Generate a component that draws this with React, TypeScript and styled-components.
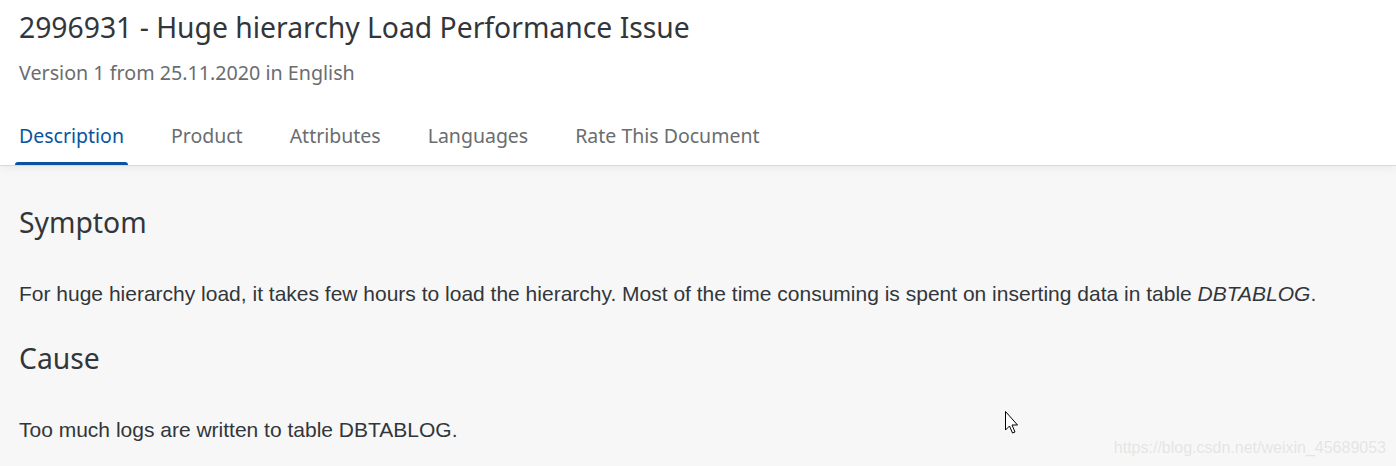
import styled, { createGlobalStyle } from "styled-components";

const GlobalStyle = createGlobalStyle`
  html, body {
    margin: 0;
    padding: 0;
    background: #f7f7f7;
  }
  body {
    width: 1396px;
    height: 466px;
    overflow: hidden;
  }
`;

const headFont = `"Noto Sans", "Open Sans", sans-serif`;
const bodyFont = `"Liberation Sans", Arial, sans-serif`;

const Screen = styled.div`
  position: relative;
  width: 1396px;
  height: 466px;
  background: #f7f7f7;
  overflow: hidden;
`;

const Header = styled.header`
  background: #ffffff;
  border-bottom: 1px solid #d9d9d9;
  box-shadow: 0 2px 10px rgba(0, 0, 0, 0.06);
  padding: 0 0 0 15px;
`;

const Title = styled.h1`
  margin: 0;
  padding: 8px 0 0 4px;
  height: 38px;
  font-family: ${headFont};
  font-weight: 400;
  font-size: 28.3px;
  line-height: 38px;
  color: #32363a;
`;

const Subtitle = styled.div`
  padding: 13px 0 0 4px;
  height: 28px;
  font-family: ${headFont};
  font-size: 19.7px;
  line-height: 28px;
  color: #6a6d70;
`;

const TabBar = styled.nav`
  display: flex;
  margin-top: 18px;
  height: 60px;
  align-items: stretch;
`;

const Tab = styled.div<{ $active?: boolean }>`
  position: relative;
  display: flex;
  align-items: center;
  padding: 0 4px;
  margin-right: 39px;
  font-family: ${headFont};
  font-size: 19.5px;
  color: ${(p) => (p.$active ? "#0854a0" : "#6a6d70")};

  &::after {
    content: "";
    display: ${(p) => (p.$active ? "block" : "none")};
    position: absolute;
    left: 0;
    right: 0;
    bottom: 0;
    height: 3px;
    border-radius: 3px 3px 0 0;
    background: #0854a0;
  }
`;

const Content = styled.main`
  padding: 27px 0 0 19px;
`;

const SectionHeading = styled.h2`
  margin: 0;
  height: 58px;
  font-family: ${headFont};
  font-weight: 400;
  font-size: 28.3px;
  line-height: 58px;
  color: #32363a;
`;

const Paragraph = styled.p`
  margin: 0;
  padding: 28px 0 20px;
  font-family: ${bodyFont};
  font-size: 21px;
  line-height: 30px;
  color: #32363a;

  em {
    font-style: italic;
  }
`;

const Watermark = styled.div`
  position: absolute;
  right: 10px;
  bottom: 9px;
  font-family: ${bodyFont};
  font-size: 16px;
  color: #e4e4e4;
  text-shadow: 0 0 1px #ffffff;
`;

const Cursor = styled.svg`
  position: absolute;
  left: 1004px;
  top: 410px;
`;

const tabs = ["Description", "Product", "Attributes", "Languages", "Rate This Document"];

export default function App() {
  return (
    <Screen>
      <GlobalStyle />
      <Header>
        <Title>2996931 - Huge hierarchy Load Performance Issue</Title>
        <Subtitle>Version 1 from 25.11.2020 in English</Subtitle>
        <TabBar>
          {tabs.map((t, i) => (
            <Tab key={t} $active={i === 0}>
              {t}
            </Tab>
          ))}
        </TabBar>
      </Header>
      <Content>
        <SectionHeading>Symptom</SectionHeading>
        <Paragraph>
          For huge hierarchy load, it takes few hours to load the hierarchy. Most of the time
          consuming is spent on inserting data in table <em>DBTABLOG</em>.
        </Paragraph>
        <SectionHeading>Cause</SectionHeading>
        <Paragraph>Too much logs are written to table DBTABLOG.</Paragraph>
      </Content>
      <Cursor width="20" height="30" viewBox="0 0 20 30">
        <path
          d="M1.5 1.5 L1.5 20 L5.5 16 L8.5 23 L11 22 L8 15 L13.5 15 Z"
          fill="#ffffff"
          stroke="#000000"
          strokeWidth="1"
          strokeLinejoin="round"
        />
      </Cursor>
      <Watermark>https://blog.csdn.net/weixin_45689053</Watermark>
    </Screen>
  );
}
